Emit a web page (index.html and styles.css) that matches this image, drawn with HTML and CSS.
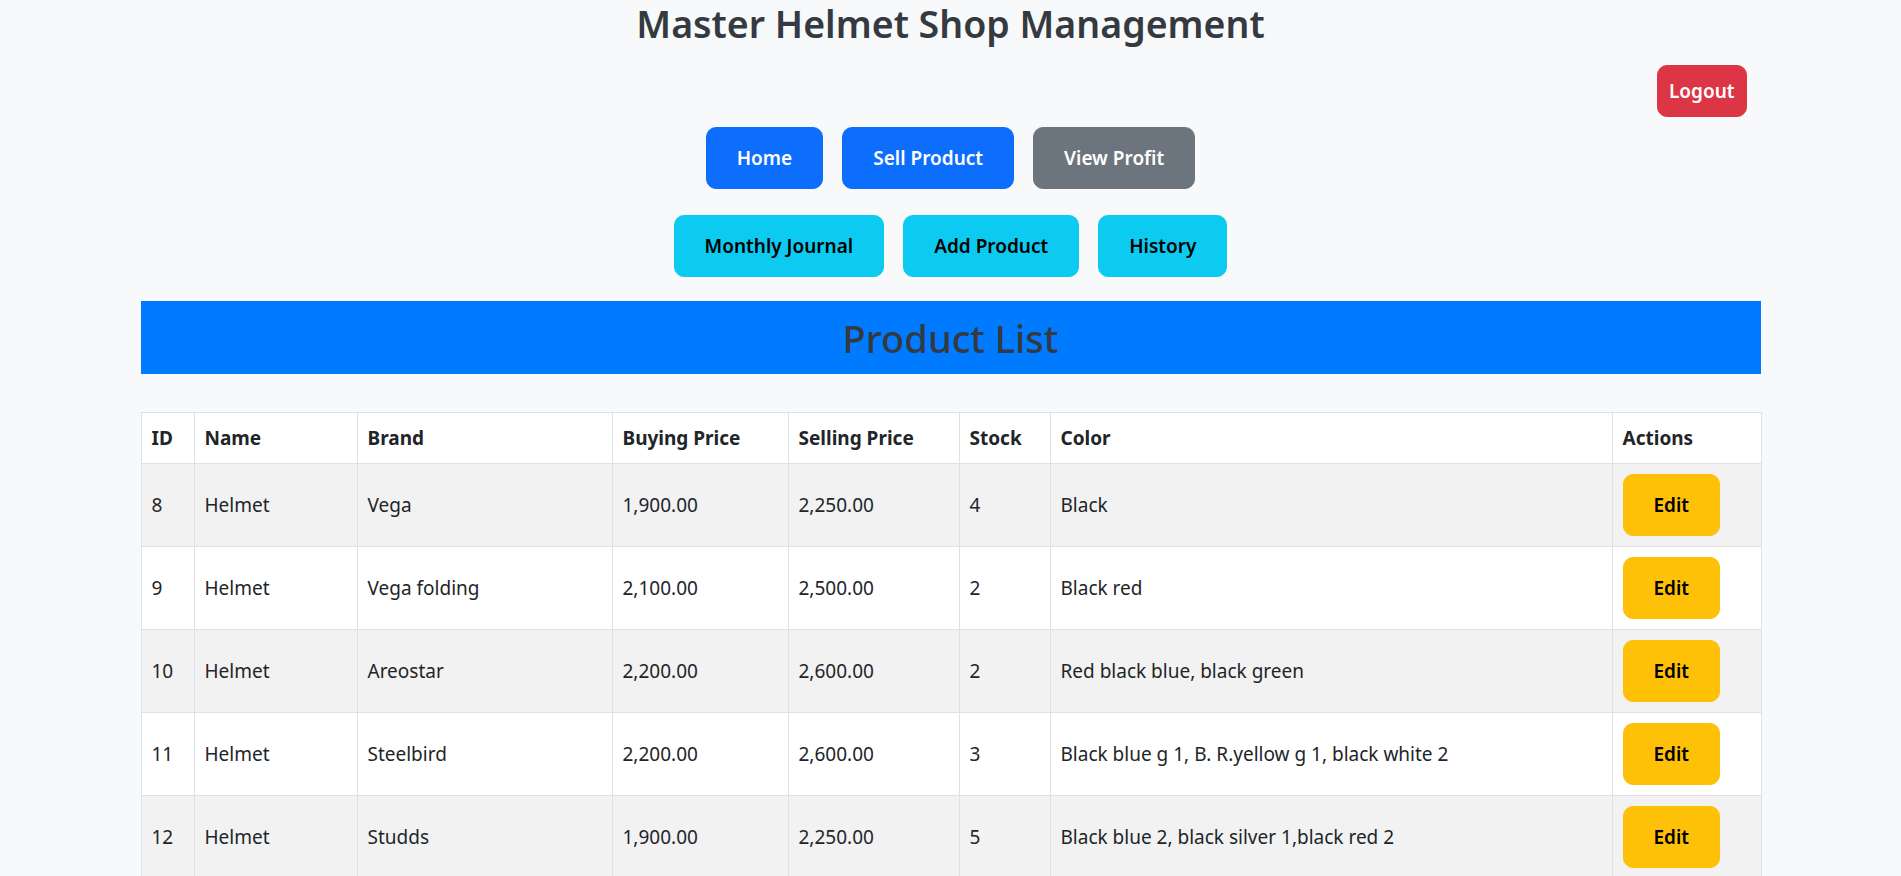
FILE: index.html
```html
<!DOCTYPE html>
<html lang="en">
<head>
<meta charset="utf-8">
<title>Master Helmet Shop Management</title>
<link rel="stylesheet" href="styles.css">
</head>
<body>
<div class="container">
  <h1 class="title">Master Helmet Shop Management</h1>
  <div class="logout-row">
    <a class="btn btn-logout" href="#">Logout</a>
  </div>
  <div class="nav-row nav-row-1">
    <a class="btn btn-nav btn-primary" href="#">Home</a>
    <a class="btn btn-nav btn-primary" href="#">Sell Product</a>
    <a class="btn btn-nav btn-secondary" href="#">View Profit</a>
  </div>
  <div class="nav-row nav-row-2">
    <a class="btn btn-nav btn-info" href="#">Monthly Journal</a>
    <a class="btn btn-nav btn-info" href="#">Add Product</a>
    <a class="btn btn-nav btn-info" href="#">History</a>
  </div>
  <h2 class="section-title">Product List</h2>
  <table class="products">
    <colgroup>
      <col class="c-id"><col class="c-name"><col class="c-brand"><col class="c-buy"><col class="c-sell"><col class="c-stock"><col class="c-color"><col class="c-actions">
    </colgroup>
    <thead>
      <tr><th>ID</th><th>Name</th><th>Brand</th><th>Buying Price</th><th>Selling Price</th><th>Stock</th><th>Color</th><th>Actions</th></tr>
    </thead>
    <tbody>
      <tr><td>8</td><td>Helmet</td><td>Vega</td><td>1,900.00</td><td>2,250.00</td><td>4</td><td>Black</td><td><a class="btn btn-edit" href="#">Edit</a></td></tr>
      <tr><td>9</td><td>Helmet</td><td>Vega folding</td><td>2,100.00</td><td>2,500.00</td><td>2</td><td>Black red</td><td><a class="btn btn-edit" href="#">Edit</a></td></tr>
      <tr><td>10</td><td>Helmet</td><td>Areostar</td><td>2,200.00</td><td>2,600.00</td><td>2</td><td>Red black blue, black green</td><td><a class="btn btn-edit" href="#">Edit</a></td></tr>
      <tr><td>11</td><td>Helmet</td><td>Steelbird</td><td>2,200.00</td><td>2,600.00</td><td>3</td><td>Black blue g 1, B. R.yellow g 1, black white 2</td><td><a class="btn btn-edit" href="#">Edit</a></td></tr>
      <tr><td>12</td><td>Helmet</td><td>Studds</td><td>1,900.00</td><td>2,250.00</td><td>5</td><td>Black blue 2, black silver 1,black red 2</td><td><a class="btn btn-edit" href="#">Edit</a></td></tr>
    </tbody>
  </table>
</div>
</body>
</html>
```
FILE: styles.css
```css
html, body {
  margin: 0;
  padding: 0;
}
body {
  background: #f8f9fa;
  color: #212529;
  font-family: "Noto Sans", "Open Sans", "DejaVu Sans", sans-serif;
  font-size: 19px;
  line-height: 30px;
}
.container {
  width: 1620px;
  margin: 0 auto;
}
.title {
  margin: 0 0 17px;
  text-align: center;
  font-size: 37.5px;
  line-height: 48px;
  font-weight: 600;
  color: #343a40;
}
.logout-row {
  display: flex;
  justify-content: flex-end;
  padding-right: 14px;
}
.btn {
  display: inline-block;
  text-decoration: none;
  font-weight: 600;
  font-size: 19px;
  line-height: 30px;
  border: 1px solid transparent;
  border-radius: 10px;
  text-align: center;
  white-space: nowrap;
}
.btn-logout {
  background: #dc3545;
  border-color: #dc3545;
  color: #fff;
  padding: 10px 11px;
}
.nav-row {
  display: flex;
  justify-content: center;
  gap: 19px;
}
.nav-row-1 {
  margin-top: 10px;
}
.nav-row-2 {
  margin-top: 26px;
}
.btn-nav {
  padding: 15px 30px;
}
.btn-primary {
  background: #0d6efd;
  border-color: #0d6efd;
  color: #fff;
}
.btn-secondary {
  background: #6c757d;
  border-color: #6c757d;
  color: #fff;
}
.btn-info {
  background: #0dcaf0;
  border-color: #0dcaf0;
  color: #000;
}
.section-title {
  margin: 24px 0 38px;
  padding: 12.5px 0;
  background: #007bff;
  color: #343a40;
  text-align: center;
  font-size: 38px;
  line-height: 48px;
  font-weight: 500;
}
.products {
  width: 1620px;
  border-collapse: collapse;
  table-layout: fixed;
  background: #fff;
}
.products th,
.products td {
  border: 1px solid #dee2e6;
  padding: 10px;
  text-align: left;
  vertical-align: middle;
  white-space: nowrap;
  overflow: hidden;
}
.products th {
  font-weight: 700;
  color: #212529;
}
.products tbody tr:nth-child(odd) td {
  background: #f2f2f2;
}
.c-id { width: 53px; }
.c-name { width: 163px; }
.c-brand { width: 255px; }
.c-buy { width: 176px; }
.c-sell { width: 171px; }
.c-stock { width: 91px; }
.c-color { width: 562px; }
.c-actions { width: 149px; }
.btn-edit {
  background: #ffc107;
  border-color: #ffc107;
  color: #000;
  padding: 15px 30px;
}
```
